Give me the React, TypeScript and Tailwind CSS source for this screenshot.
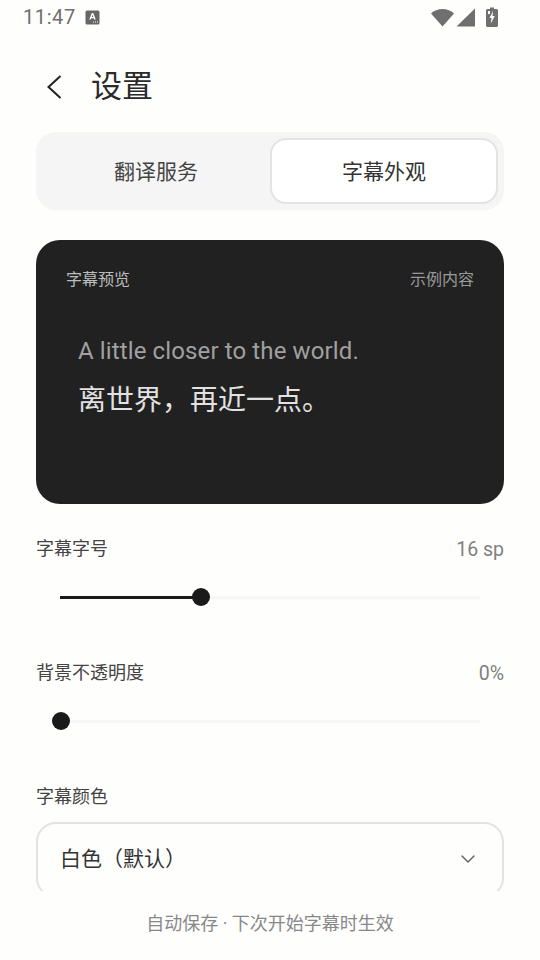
import { ChevronDown } from "lucide-react"

const font = "font-['Roboto','Noto_Sans_CJK_SC',sans-serif]"

function StatusBar() {
  return (
    <div className="h-[34px] flex items-center pl-[23px] pr-[42px] text-[#6f6f6f]">
      <span className="text-[20px] leading-none tracking-[0.6px]">11:47</span>
      <svg className="ml-[9px]" width="15" height="15" viewBox="0 0 15 15">
        <rect x="0.5" y="0.5" width="14" height="14" rx="1.5" fill="#666666" />
        <path d="M4.200 9.500 6.800 3h1.400l2.600 6.500H9.300L8.800 8.200H6.200L5.700 9.500zM6.700 6.900h1.600L7.500 4.800z" fill="#fff" />
        <rect x="8" y="11.500" width="1" height="1" fill="#fff" />
        <rect x="10" y="11.500" width="1" height="1" fill="#fff" />
        <rect x="12" y="11.500" width="1" height="1" fill="#fff" />
      </svg>
      <div className="ml-auto flex items-center">
        <svg width="23" height="19" viewBox="0 0 23 19">
          <path d="M0 5.500C3 2.700 7.200 1 11.500 1S20 2.700 23 5.500L11.500 18.500z" fill="#6f6f6f" />
        </svg>
        <svg className="ml-[2px]" width="19" height="19" viewBox="0 0 19 19">
          <path d="M19 0.500V18.500H0.500z" fill="#6f6f6f" />
        </svg>
        <svg className="ml-[11px]" width="12" height="20" viewBox="0 0 12 20">
          <path d="M1.500 2H4V0.500H8V2h2.500A1.500 1.500 0 0 1 12 3.500v15a1.500 1.500 0 0 1-1.500 1.500h-9A1.500 1.500 0 0 1 0 18.500v-15A1.500 1.500 0 0 1 1.500 2z" fill="#6f6f6f" />
          <path d="M7 4 3.500 11H5.500L4.800 16.500 8.800 9H6.500z" fill="#fff" />
          <rect x="2" y="4" width="2" height="3" fill="#fff" />
        </svg>
      </div>
    </div>
  )
}

function Tabs() {
  return (
    <div className="mx-9 mt-[11px] h-[78px] rounded-[20px] bg-[#f5f5f5] flex p-[6px]">
      <div className="w-[228px] pt-[4px] flex items-center justify-center text-[21px] text-[#444444]">翻译服务</div>
      <div className="w-[228px] pt-[4px] flex items-center justify-center text-[21px] text-[#333333] bg-white border-2 border-[#e3e3e3] rounded-[16px]">
        字幕外观
      </div>
    </div>
  )
}

function Preview() {
  return (
    <div className="mx-9 mt-[30px] h-[264px] rounded-[24px] bg-[#212121] px-[30px] pt-[27px]">
      <div className="flex justify-between text-[16px] leading-[26px]">
        <span className="text-[#bdbdbd]">字幕预览</span>
        <span className="text-[#9a9a9a]">示例内容</span>
      </div>
      <div className="mt-[40px] pl-[12px] text-[24px] tracking-[0.12px] leading-[36px] text-[#a0a0a0]">
        A little closer to the world.
      </div>
      <div className="mt-[11px] pl-[12px] text-[28px] leading-[42px] text-[#e2e2e2]">离世界，再近一点。</div>
    </div>
  )
}

function Setting({ label, value, percent }: { label: string; value: string; percent: number }) {
  return (
    <div>
      <div className="flex justify-between items-center h-[28px]">
        <span className="text-[18px] text-[#444444]">{label}</span>
        <span className="text-[19.500px] pt-[3px] text-[#808080]">{value}</span>
      </div>
      <div className="mx-6 mt-[34px] h-[3px] bg-[#f7f7f7] relative">
        <div className="h-[3px] bg-[#1a1a1a]" style={{ width: `${percent}%` }} />
        <div
          className="absolute top-[-8px] w-[18px] h-[18px] ml-[-9px] rounded-full bg-[#1a1a1a]"
          style={{ left: `${percent}%` }}
        />
      </div>
    </div>
  )
}

export default function App() {
  return (
    <div className={`w-[540px] h-[960px] bg-[#fefefd] overflow-hidden ${font}`}>
      <StatusBar />
      <div className="h-[68px] mt-[19px] flex items-center">
        <svg className="ml-[46px]" width="16" height="26" viewBox="0 0 16 26">
          <path d="M14.500 2 2.500 13l12 11" fill="none" stroke="#222222" strokeWidth="2" />
        </svg>
        <h1 className="ml-[29px] text-[31px] font-normal text-[#2a2a2a]">设置</h1>
      </div>
      <Tabs />
      <Preview />
      <div className="h-[387px] overflow-hidden">
        <div className="mx-9 mt-[30px] flex flex-col gap-[59px]">
          <Setting label="字幕字号" value="16 sp" percent={33.5} />
          <Setting label="背景不透明度" value="0%" percent={0.12} />
        </div>
        <div className="mx-9 mt-[59px]">
          <div className="h-[28px] flex items-center text-[18px] text-[#444444]">字幕颜色</div>
          <div className="mt-[12px] h-[76px] rounded-[20px] border-2 border-[#e3e3e3] flex items-center justify-between pl-[22px] pr-[22px]">
            <span className="text-[21px] text-[#333333]">白色（默认）</span>
            <ChevronDown size={24} strokeWidth={1.500} className="text-[#666666] mt-[-3px]" />
          </div>
        </div>
      </div>
      <div className="mt-[19px] text-center text-[18px] leading-[28px] text-[#888888]">自动保存 · 下次开始字幕时生效</div>
    </div>
  )
}
